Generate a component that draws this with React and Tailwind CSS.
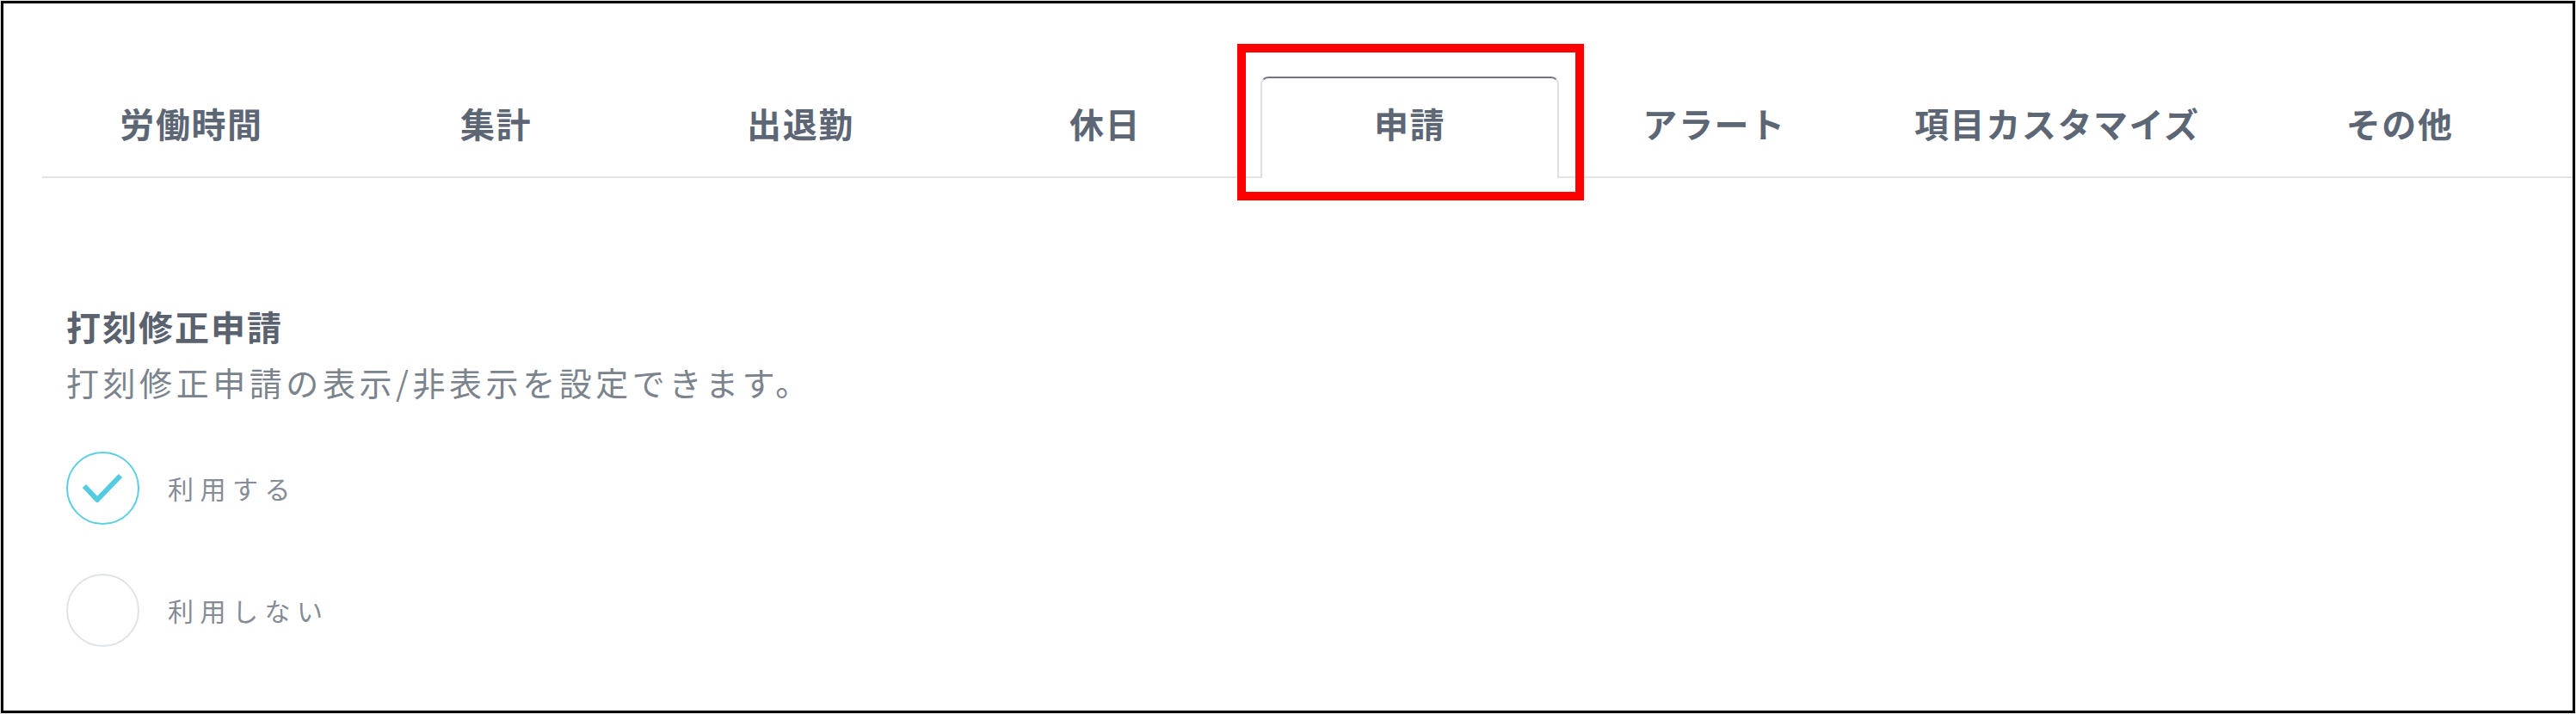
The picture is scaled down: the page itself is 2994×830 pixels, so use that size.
import { useState } from "react";

const tabs = [
  "労働時間",
  "集計",
  "出退勤",
  "休日",
  "申請",
  "アラート",
  "項目カスタマイズ",
  "その他",
];

const jp = { fontFamily: '"Noto Sans CJK JP", "Noto Sans", sans-serif' };

function Radio({ checked }) {
  return (
    <svg width="85" height="85" viewBox="0 0 85 85" className="shrink-0">
      <circle
        cx="42.5"
        cy="42.5"
        r="41.5"
        fill="white"
        stroke={checked ? "#5ccfe1" : "#dfe2e6"}
        strokeWidth="2"
      />
      {checked && (
        <polyline
          points="21,40 36,56 63,28"
          fill="none"
          stroke="#55cbe0"
          strokeWidth="6"
          strokeLinejoin="round"
        />
      )}
    </svg>
  );
}

export default function App() {
  const [activeTab, setActiveTab] = useState("申請");
  const [useRequest, setUseRequest] = useState(true);

  return (
    <div className="w-[2994px] h-[830px] p-[1px] bg-[#e6e6e6]" style={jp}>
      <div className="h-[828px] border-[3px] border-black bg-white">
        {/* タブ */}
        <div className="pt-[85px] pl-[45px]">
          <div className="flex items-end gap-[7px] border-b-2 border-[#e3e4e6]">
            {tabs.map((tab) => {
              const active = tab === activeTab;
              return (
                <div
                  key={tab}
                  onClick={() => setActiveTab(tab)}
                  className={`relative min-w-[347px] h-[118px] -mb-[2px] px-[50px] pb-[12px] flex items-center justify-center border-2 border-b-0 rounded-t-[9px] cursor-pointer ${active ? "bg-white border-[#dcdfe3] border-t-[#6d7585] z-10" : "border-transparent"}`}
                >
                  <span className="text-[40px] leading-[56px] font-bold tracking-[0.04em] text-[#5d6674] whitespace-nowrap">
                    {tab}
                  </span>
                  {active && (
                    <div className="absolute -left-[29px] -right-[31px] -top-[40px] -bottom-[26px] border-[10px] border-[#ff0000] pointer-events-none" />
                  )}
                </div>
              );
            })}
          </div>
        </div>

        {/* 打刻修正申請 */}
        <div className="pl-[73px] mt-[144px]">
          <h2 className="text-[40px] leading-[56px] font-bold tracking-[0.05em] text-[#5a626f]">
            打刻修正申請
          </h2>
          <p className="mt-[9px] text-[38px] leading-[56px] tracking-[0.12em] text-[#7b838d]">
            打刻修正申請の表示/非表示を設定できます。
          </p>

          <div
            className="mt-[53px] flex items-center gap-[33px] cursor-pointer"
            onClick={() => setUseRequest(true)}
          >
            <Radio checked={useRequest} />
            <span className="text-[30px] leading-[85px] tracking-[0.25em] text-[#858c96]">
              利用する
            </span>
          </div>
          <div
            className="mt-[57px] flex items-center gap-[33px] cursor-pointer"
            onClick={() => setUseRequest(false)}
          >
            <Radio checked={!useRequest} />
            <span className="text-[30px] leading-[85px] tracking-[0.25em] text-[#858c96]">
              利用しない
            </span>
          </div>
        </div>
      </div>
    </div>
  );
}
